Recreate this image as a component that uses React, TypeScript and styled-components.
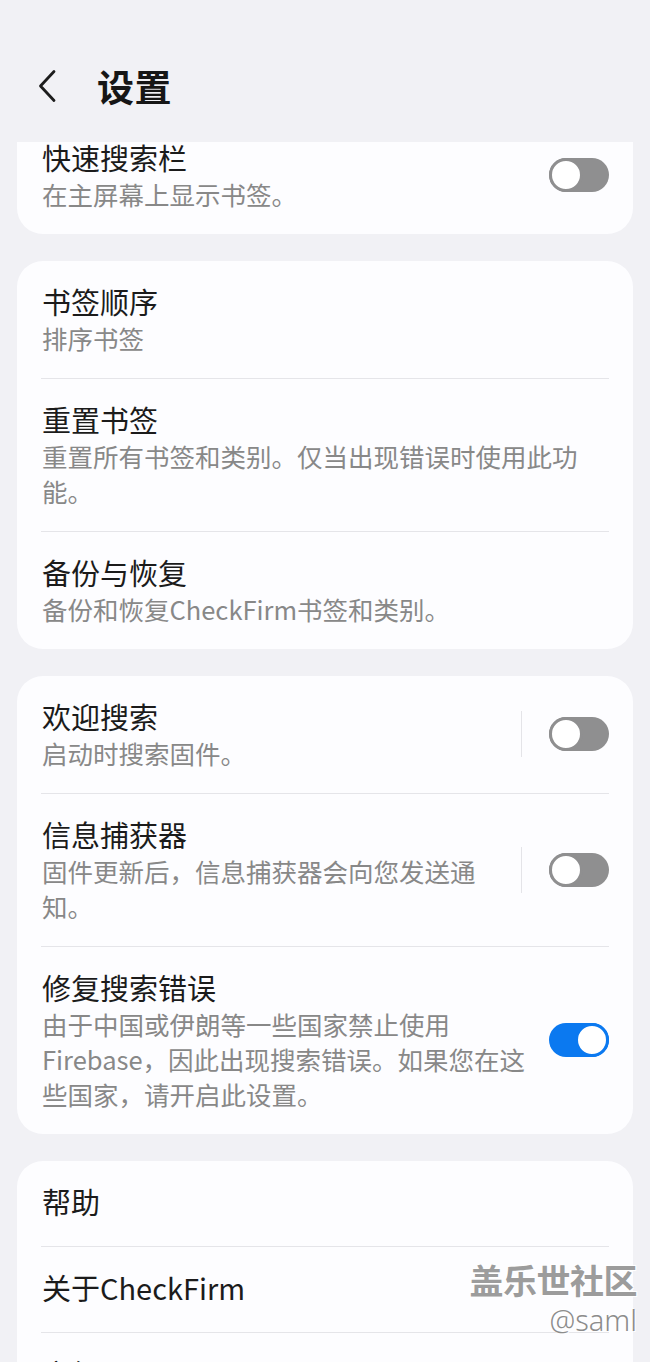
import React from "react";
import styled, { createGlobalStyle } from "styled-components";

const Global = createGlobalStyle`
  html, body {
    margin: 0;
    padding: 0;
    background: #f1f1f5;
  }
  body {
    font-family: "Noto Sans CJK SC", "Noto Sans", "Liberation Sans", sans-serif;
    -webkit-font-smoothing: antialiased;
  }
`;

const Screen = styled.div`
  position: relative;
  width: 650px;
  height: 1362px;
  overflow: hidden;
  background: #f1f1f5;
  display: flex;
  flex-direction: column;
`;

const Header = styled.header`
  flex: none;
  height: 142px;
  box-sizing: border-box;
  padding: 62px 0 0 37px;
  display: flex;
  align-items: flex-start;
  gap: 40px;
`;

const BackButton = styled.button`
  border: 0;
  background: none;
  padding: 0;
  height: 48px;
  display: flex;
  align-items: center;
  color: #1c1c1c;
`;

const Title = styled.h1`
  margin: 0;
  font-size: 37px;
  line-height: 48px;
  font-weight: 700;
  color: #161616;
  letter-spacing: 0.5px;
`;

const Scroller = styled.main`
  flex: 1;
  overflow: hidden;
`;

const List = styled.div`
  margin-top: -25px;
  display: flex;
  flex-direction: column;
  gap: 27px;
  padding: 0 17px;
`;

const Card = styled.section`
  background: #fdfdff;
  border-radius: 26px;
  padding: 0 24px;
`;

const Row = styled.div<{ $single: boolean }>`
  display: flex;
  align-items: center;
  box-sizing: border-box;
  padding: ${(p) => (p.$single ? "22px 0 26px 1px" : "22px 0 23px 1px")};
  & + & {
    border-top: 1px solid #e5e5e9;
  }
`;

const TextCol = styled.div`
  flex: 1;
  min-width: 0;
  display: flex;
  flex-direction: column;
`;

const ItemTitle = styled.div`
  font-size: 29px;
  line-height: 37px;
  color: #1b1b1b;
`;

const ItemSub = styled.div`
  font-size: 25.5px;
  line-height: 35px;
  color: #888888;
  white-space: pre;
`;

const VDivider = styled.span`
  flex: none;
  width: 1.5px;
  height: 46px;
  background: #e4e4e8;
  margin-left: 12px;
`;

const Track = styled.span<{ $on: boolean; $split: boolean }>`
  flex: none;
  position: relative;
  width: 60px;
  height: 34px;
  border-radius: 17px;
  margin-left: ${(p) => (p.$split ? "27px" : "20px")};
  background: ${(p) => (p.$on ? "#0b79f0" : "#8f8f90")};
  &::after {
    content: "";
    position: absolute;
    top: 0;
    left: ${(p) => (p.$on ? "26px" : "0")};
    width: 34px;
    height: 34px;
    box-sizing: border-box;
    border-radius: 50%;
    background: #ffffff;
    border: 3px solid ${(p) => (p.$on ? "#0b79f0" : "#8f8f90")};
  }
`;

const Watermark = styled.div`
  position: absolute;
  right: 13px;
  top: 1257px;
  display: flex;
  flex-direction: column;
  align-items: flex-end;
  pointer-events: none;
`;

const WatermarkName = styled.span`
  font-size: 34px;
  line-height: 46px;
  font-weight: 700;
  color: #9c9c9c;
  letter-spacing: -0.5px;
  text-shadow: 1px 1px 0 #ffffff, -1px -1px 0 #ffffff, 1px -1px 0 #ffffff,
    -1px 1px 0 #ffffff;
`;

const WatermarkHandle = styled.span`
  font-family: "Noto Sans", "Liberation Sans", sans-serif;
  font-size: 29px;
  line-height: 34px;
  font-weight: 300;
  color: #8c8c8c;
  text-shadow: 1px 1px 0 #ffffff, -1px -1px 0 #ffffff;
`;

type Item = {
  title: string;
  sub?: string;
  toggle?: boolean;
  split?: boolean;
};

const groups: Item[][] = [
  [{ title: "快速搜索栏", sub: "在主屏幕上显示书签。", toggle: false }],
  [
    { title: "书签顺序", sub: "排序书签" },
    { title: "重置书签", sub: "重置所有书签和类别。仅当出现错误时使用此功\n能。" },
    { title: "备份与恢复", sub: "备份和恢复CheckFirm书签和类别。" },
  ],
  [
    { title: "欢迎搜索", sub: "启动时搜索固件。", toggle: false, split: true },
    {
      title: "信息捕获器",
      sub: "固件更新后，信息捕获器会向您发送通\n知。",
      toggle: false,
      split: true,
    },
    {
      title: "修复搜索错误",
      sub: "由于中国或伊朗等一些国家禁止使用\nFirebase，因此出现搜索错误。如果您在这\n些国家，请开启此设置。",
      toggle: true,
    },
  ],
  [{ title: "帮助" }, { title: "关于CheckFirm" }, { title: "高级" }],
];

function ChevronLeft() {
  return (
    <svg width="20" height="34" viewBox="0 0 20 34" fill="none">
      <path
        d="M17 2.5 L3.5 17 L17 31.5"
        stroke="currentColor"
        strokeWidth="2.8"
        strokeLinecap="round"
        strokeLinejoin="round"
      />
    </svg>
  );
}

export default function App() {
  return (
    <Screen>
      <Global />
      <Header>
        <BackButton aria-label="返回">
          <ChevronLeft />
        </BackButton>
        <Title>设置</Title>
      </Header>
      <Scroller>
        <List>
          {groups.map((items, gi) => (
            <Card key={gi}>
              {items.map((it) => (
                <Row key={it.title} $single={!it.sub}>
                  <TextCol>
                    <ItemTitle>{it.title}</ItemTitle>
                    {it.sub && <ItemSub>{it.sub}</ItemSub>}
                  </TextCol>
                  {it.split && <VDivider />}
                  {it.toggle !== undefined && (
                    <Track $on={it.toggle} $split={!!it.split} />
                  )}
                </Row>
              ))}
            </Card>
          ))}
        </List>
      </Scroller>
      <Watermark>
        <WatermarkName>盖乐世社区</WatermarkName>
        <WatermarkHandle>@saml</WatermarkHandle>
      </Watermark>
    </Screen>
  );
}
